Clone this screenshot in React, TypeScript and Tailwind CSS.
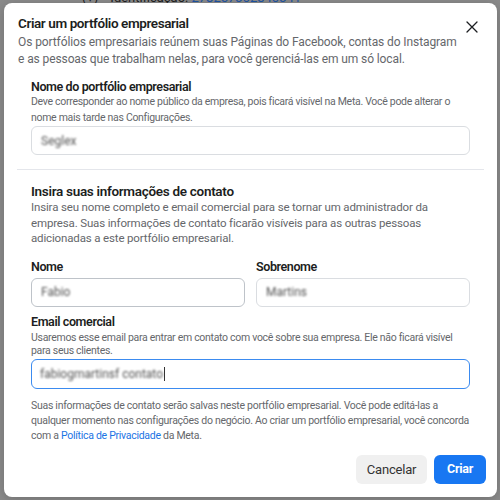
import React from "react";

function BlurText({ children }: { children: React.ReactNode }) {
  return <span className="blur-[1.2px] text-[#555] select-none">{children}</span>;
}

export default function App() {
  return (
    <div className="w-[500px] h-[500px] overflow-hidden bg-[#8b8b8b] font-['Roboto',sans-serif] pl-[4px] pr-[3px]">
      {/* page behind the overlay, only a sliver shows */}
      <div className="h-[3px] overflow-hidden">
        <div className="flex gap-3 pl-[78px] -mt-[9px] text-[13px] leading-[13px] text-[#1c1c1c]">
          <span>(+)</span>
          <span>
            Identificação: <span className="text-[#1b4f9c]">278257362840341</span>
          </span>
        </div>
      </div>

      <div className="h-[494px] bg-white rounded-lg flex flex-col shadow-[0_2px_12px_rgba(0,0,0,0.2)]">
        {/* header */}
        <div className="flex items-start pl-[14px] pr-[14px] pt-[11px]">
          <div className="flex-1">
            <h1 className="text-[13.5px] leading-[19px] font-semibold tracking-[-0.4px] text-[#1c1e21]">
              Criar um portfólio empresarial
            </h1>
            <p className="text-[12px] leading-[17px] tracking-[-0.1px] text-[#65676b] mt-[1px]">
              Os portfólios empresariais reúnem suas Páginas do Facebook, contas do Instagram e as
              pessoas que trabalham nelas, para você gerenciá-las em um só local.
            </p>
          </div>
          <button className="w-[22px] h-[22px] mt-[2px] flex items-center justify-center text-[#1c1e21]">
            <svg width="12" height="12" viewBox="0 0 12 12" fill="none" stroke="currentColor" strokeWidth="1.3" strokeLinecap="round">
              <path d="M1 1L11 11M11 1L1 11" />
            </svg>
          </button>
        </div>

        {/* section 1 */}
        <div className="px-[27px] pt-[11px]">
          <div className="text-[12.5px] leading-[15px] font-semibold tracking-[-0.4px] text-[#1c1e21]">
            Nome do portfólio empresarial
          </div>
          <p className="text-[10.5px] leading-[16px] tracking-[-0.3px] text-[#65676b]">
            Deve corresponder ao nome público da empresa, pois ficará visível na Meta. Você pode
            alterar o nome mais tarde nas Configurações.
          </p>
          <div className="h-[29px] border border-[#dadde1] rounded-md flex items-center px-[9px] text-[12px]">
            <BlurText>Seglex</BlurText>
          </div>
        </div>

        <div className="mx-[13px] mt-[14px] border-t border-[#e4e6eb]" />

        {/* section 2 */}
        <div className="px-[27px] pt-[12px]">
          <div className="text-[13.5px] leading-[18px] font-semibold tracking-[-0.3px] text-[#1c1e21]">
            Insira suas informações de contato
          </div>
          <p className="text-[11.5px] leading-[15.5px] tracking-[-0.15px] text-[#65676b]">
            Insira seu nome completo e email comercial para se tornar um administrador da empresa.
            Suas informações de contato ficarão visíveis para as outras pessoas adicionadas a este
            portfólio empresarial.
          </p>

          <div className="grid grid-cols-2 gap-[11px] mt-[12px]">
            <div>
              <div className="text-[12.5px] leading-[15px] font-semibold tracking-[-0.4px] text-[#1c1e21]">Nome</div>
              <div className="mt-[4px] h-[29px] border border-[#bec3c9] rounded-md flex items-center px-[9px] text-[12px]">
                <BlurText>Fabio</BlurText>
              </div>
            </div>
            <div>
              <div className="text-[12.5px] leading-[15px] font-semibold tracking-[-0.4px] text-[#1c1e21]">Sobrenome</div>
              <div className="mt-[4px] h-[29px] border border-[#dadde1] rounded-md flex items-center px-[9px] text-[12px]">
                <BlurText>Martins</BlurText>
              </div>
            </div>
          </div>

          <div className="mt-[7px] text-[12.5px] leading-[15px] font-semibold tracking-[-0.4px] text-[#1c1e21]">
            Email comercial
          </div>
          <p className="text-[10.5px] leading-[13px] tracking-[-0.3px] text-[#65676b] mt-[2px]">
            Usaremos esse email para entrar em contato com você sobre sua empresa. Ele não ficará
            visível para seus clientes.
          </p>
          <div className="mt-[2px] h-[30px] border-[1.5px] border-[#3b8bf0] rounded-md flex items-center px-[8px] text-[12px]">
            <BlurText>fabiogmartinsf contato</BlurText>
            <span className="w-px h-[14px] bg-[#333] ml-[1px]" />
          </div>

          <p className="mt-[9px] text-[10.5px] leading-[15px] tracking-[-0.28px] text-[#65676b]">
            Suas informações de contato serão salvas neste portfólio empresarial. Você pode editá-las
            a qualquer momento nas configurações do negócio. Ao criar um portfólio empresarial, você
            concorda com a <span className="text-[#1b74e4]">Política de Privacidade</span> da Meta.
          </p>
        </div>

        {/* footer */}
        <div className="flex justify-end gap-[7px] px-[11px] mt-auto mb-[13px]">
          <button className="h-[29px] w-[71px] rounded-md bg-[#f0f0f0] text-[13px] tracking-[-0.2px] text-[#333]">
            Cancelar
          </button>
          <button className="h-[29px] w-[52px] rounded-md bg-[#1877f2] text-[12.5px] font-bold tracking-[-0.3px] text-white">
            Criar
          </button>
        </div>
      </div>
    </div>
  );
}
